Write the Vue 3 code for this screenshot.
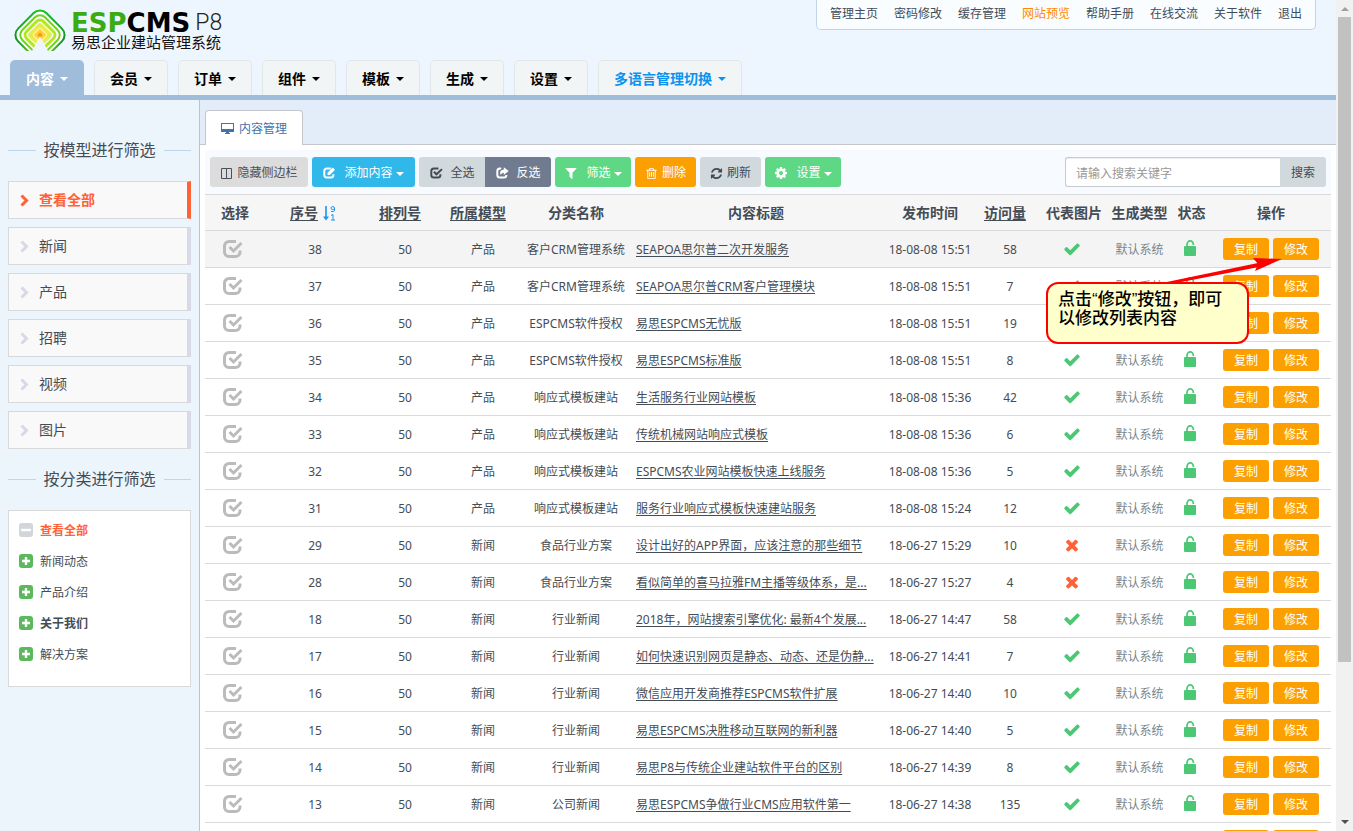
<script setup>
import { ref } from 'vue'

const keyword = ref('')

const topLinks = ['管理主页', '密码修改', '缓存管理', '网站预览', '帮助手册', '在线交流', '关于软件', '退出']
const navTabs = ['内容', '会员', '订单', '组件', '模板', '生成', '设置', '多语言管理切换']
const models = ['查看全部', '新闻', '产品', '招聘', '视频', '图片']
const categories = [
  { name: '查看全部', kind: 'all' },
  { name: '新闻动态', kind: 'node' },
  { name: '产品介绍', kind: 'node' },
  { name: '关于我们', kind: 'strong' },
  { name: '解决方案', kind: 'node' }
]

const data = [
  [38, '产品', '客户CRM管理系统', 'SEAPOA思尔普二次开发服务', '18-08-08 15:51', 58, true],
  [37, '产品', '客户CRM管理系统', 'SEAPOA思尔普CRM客户管理模块', '18-08-08 15:51', 7, true],
  [36, '产品', 'ESPCMS软件授权', '易思ESPCMS无忧版', '18-08-08 15:51', 19, true],
  [35, '产品', 'ESPCMS软件授权', '易思ESPCMS标准版', '18-08-08 15:51', 8, true],
  [34, '产品', '响应式模板建站', '生活服务行业网站模板', '18-08-08 15:36', 42, true],
  [33, '产品', '响应式模板建站', '传统机械网站响应式模板', '18-08-08 15:36', 6, true],
  [32, '产品', '响应式模板建站', 'ESPCMS农业网站模板快速上线服务', '18-08-08 15:36', 5, true],
  [31, '产品', '响应式模板建站', '服务行业响应式模板快速建站服务', '18-08-08 15:24', 12, true],
  [29, '新闻', '食品行业方案', '设计出好的APP界面，应该注意的那些细节', '18-06-27 15:29', 10, false],
  [28, '新闻', '食品行业方案', '看似简单的喜马拉雅FM主播等级体系，是...', '18-06-27 15:27', 4, false],
  [18, '新闻', '行业新闻', '2018年，网站搜索引擎优化: 最新4个发展...', '18-06-27 14:47', 58, true],
  [17, '新闻', '行业新闻', '如何快速识别网页是静态、动态、还是伪静...', '18-06-27 14:41', 7, true],
  [16, '新闻', '行业新闻', '微信应用开发商推荐ESPCMS软件扩展', '18-06-27 14:40', 10, true],
  [15, '新闻', '行业新闻', '易思ESPCMS决胜移动互联网的新利器', '18-06-27 14:40', 5, true],
  [14, '新闻', '行业新闻', '易思P8与传统企业建站软件平台的区别', '18-06-27 14:39', 8, true],
  [13, '新闻', '公司新闻', '易思ESPCMS争做行业CMS应用软件第一', '18-06-27 14:38', 135, true],
  ['', '', '', '', '', '', true]
]
const rows = data.map(([id, model, category, title, date, visits, picture]) => ({
  id, model, category, title, date, visits, picture
}))

const icons = {
  check: 'M1671 566q0 40-28 68l-724 724-136 136q-28 28-68 28t-68-28l-136-136-362-362q-28-28-28-68t28-68l136-136q28-28 68-28t68 28l294 295 656-657q28-28 68-28t68 28l136 136q28 28 28 68z',
  times: 'M1490 1322q0 40-28 68l-136 136q-28 28-68 28t-68-28l-294-294-294 294q-28 28-68 28t-68-28l-136-136q-28-28-28-68t28-68l294-294-294-294q-28-28-28-68t28-68l136-136q28-28 68-28t68 28l294 294 294-294q28-28 68-28t68 28l136 136q28 28 28 68t-28 68l-294 294 294 294q28 28 28 68z',
  filter: 'M1595 295q17 41-14 70l-493 493v742q0 42-39 59-13 5-25 5-27 0-45-19l-256-256q-19-19-19-45v-486l-493-493q-31-29-14-70 17-39 59-39h1280q42 0 59 39z',
  refresh: 'M1639 1056q0 5-1 7-64 268-268 434.5t-478 166.5q-146 0-282.5-55t-243.5-157l-129 129q-19 19-45 19t-45-19-19-45v-448q0-26 19-45t45-19h448q26 0 45 19t19 45-19 45l-137 137q71 66 161 102t187 36q134 0 250-65t186-179q11-17 53-117 8-23 30-23h192q13 0 22.5 9.5t9.5 22.5zm25-800v448q0 26-19 45t-45 19h-448q-26 0-45-19t-19-45 19-45l138-138q-148-137-349-137-134 0-250 65t-186 179q-11 17-53 117-8 23-30 23h-199q-13 0-22.5-9.5t-9.5-22.5v-7q65-268 270-434.5t480-166.5q146 0 284 55.5t245 156.5l130-129q19-19 45-19t45 19 19 45z',
  cog: 'M1152 896q0-106-75-181t-181-75-181 75-75 181 75 181 181 75 181-75 75-181zm512-109v222q0 12-8 23t-20 13l-185 28q-19 54-39 91 35 50 107 138 10 12 10 25t-9 23q-27 37-99 108t-94 71q-12 0-26-9l-138-108q-44 23-91 38-16 136-29 186-7 28-36 28h-222q-14 0-24.5-8.5t-11.5-21.5l-28-184q-49-16-90-37l-141 107q-10 9-25 9-14 0-25-11-126-114-165-168-7-10-7-23 0-12 8-23 15-21 51-66.5t54-70.5q-27-50-41-99l-183-27q-13-2-21-12.5t-8-23.5v-222q0-12 8-23t19-13l186-28q14-46 39-92-40-57-107-138-10-12-10-24 0-10 9-23 26-36 98.5-107.5t94.5-71.5q13 0 26 10l138 107q44-23 91-38 16-136 29-186 7-28 36-28h222q14 0 24.5 8.5t11.5 21.5l28 184q49 16 90 37l142-107q9-9 24-9 13 0 25 10 129 119 165 170 7 8 7 22 0 12-8 23-15 21-51 66.5t-54 70.5q26 50 41 98l183 28q13 2 21 12.5t8 23.5z',
  trash: 'M704 736v576q0 14-9 23t-23 9h-64q-14 0-23-9t-9-23v-576q0-14 9-23t23-9h64q14 0 23 9t9 23zm256 0v576q0 14-9 23t-23 9h-64q-14 0-23-9t-9-23v-576q0-14 9-23t23-9h64q14 0 23 9t9 23zm256 0v576q0 14-9 23t-23 9h-64q-14 0-23-9t-9-23v-576q0-14 9-23t23-9h64q14 0 23 9t9 23zm128 724v-948h-896v948q0 22 7 40.5t14.5 27 10.5 8.5h832q3 0 10.5-8.5t14.5-27 7-40.5zm-672-1076h448l-48-117q-7-9-17-11h-317q-10 2-17 11zm928 32v64q0 14-9 23t-23 9h-96v948q0 83-47 143.5t-113 60.5h-832q-66 0-113-58.5t-47-141.5v-952h-96q-14 0-23-9t-9-23v-64q0-14 9-23t23-9h309l70-167q15-37 54-63t79-26h320q40 0 79 26t54 63l70 167h309q14 0 23 9t9 23z'
}
</script>

<template>
  <div class="window">
    <div class="page">
      <header class="header">
        <div class="header-top">
          <div class="brand">
            <svg class="logo" viewBox="0 0 52 43" aria-hidden="true">
              <defs>
                <linearGradient id="ringOuter" x1="0" y1="0" x2="1" y2="1">
                  <stop offset="0" stop-color="#14c81e" />
                  <stop offset="0.6" stop-color="#12902a" />
                  <stop offset="1" stop-color="#a5e612" />
                </linearGradient>
                <radialGradient id="core" cx="0.5" cy="0.5" r="0.5">
                  <stop offset="0" stop-color="#ffae1a" />
                  <stop offset="0.6" stop-color="#ffe64a" />
                  <stop offset="1" stop-color="#d8f04a" />
                </radialGradient>
                <clipPath id="logoClip"><path d="M0 0H52V43H34L26 28L18 43H0Z" /></clipPath>
              </defs>
              <g clip-path="url(#logoClip)">
                <g transform="translate(26 27) rotate(45)" fill="#fff">
                  <rect x="-20" y="-20" width="40" height="40" rx="9" stroke="url(#ringOuter)" stroke-width="2" />
                  <rect x="-16" y="-16" width="32" height="32" rx="7" stroke="#6fd51c" stroke-width="2" />
                  <rect x="-12" y="-12" width="24" height="24" rx="5" stroke="#b4e61e" stroke-width="3" />
                  <rect x="-9" y="-9" width="18" height="18" rx="3" fill="url(#core)" stroke="#e8f07a" />
                  <rect x="-5" y="-5" width="10" height="10" rx="1" fill="#ffd23c" stroke="#fff3a0" />
                  <rect x="-2" y="-2" width="4" height="4" fill="#f59a1c" />
                </g>
              </g>
            </svg>
            <div class="brand-text">
              <div class="brand-name"><b><span class="esp">ESP</span>CMS</b><span class="version">P8</span></div>
              <div class="brand-sub">易思企业建站管理系统</div>
            </div>
          </div>
          <nav class="top-links">
            <a v-for="link in topLinks" :key="link" href="#" :class="{ preview: link === '网站预览' }">{{ link }}</a>
          </nav>
        </div>
        <nav class="nav">
          <a v-for="(tab, i) in navTabs" :key="tab" href="#" class="nav-tab" :class="{ active: i === 0, lang: i === 7 }">
            {{ tab }}<span class="caret"></span>
          </a>
        </nav>
      </header>

      <div class="body">
        <aside class="sidebar">
          <h2 class="side-title"><span>按模型进行筛选</span></h2>
          <nav class="models">
            <a v-for="(m, i) in models" :key="m" href="#" class="model" :class="{ active: i === 0 }">
              <svg viewBox="0 0 9 13" class="chevron" aria-hidden="true"><path d="M1.500 1.500L6.500 6.500L1.500 11.500" fill="none" stroke="currentColor" stroke-width="3" /></svg>
              {{ m }}
            </a>
          </nav>
          <h2 class="side-title"><span>按分类进行筛选</span></h2>
          <ul class="tree">
            <li v-for="c in categories" :key="c.name" :class="c.kind">
              <svg viewBox="0 0 14 14" class="box-icon" aria-hidden="true">
                <rect width="14" height="14" rx="3" fill="currentColor" />
                <path :d="c.kind === 'all' ? 'M2 7H12' : 'M3 7H11M7 3V11'" stroke="#fff" stroke-width="2.4" />
              </svg>
              <a href="#">{{ c.name }}</a>
            </li>
          </ul>
        </aside>

        <main class="main">
          <div class="tabstrip">
            <a href="#" class="page-tab">
              <svg viewBox="0 0 13 12" class="monitor" aria-hidden="true">
                <path d="M0 0H13V9H0ZM1 1V6H12V1Z" fill="currentColor" fill-rule="evenodd" />
                <path d="M5 9H8V10H9V11H4V10H5Z" fill="currentColor" />
              </svg>
              内容管理
            </a>
          </div>

          <div class="content">
            <div class="toolbar">
              <button class="btn light w98">
                <svg viewBox="0 0 13 11" class="columns" aria-hidden="true"><path d="M1.500 .5H11.500V10.500H1.500ZM6.500 .5V10.500" fill="none" stroke="currentColor" /></svg>隐藏侧边栏
              </button>
              <button class="btn blue w103 wide">
                <svg viewBox="0 0 20 18" class="boxed" aria-hidden="true">
                  <path d="M12 2H6A4 4 0 0 0 2 6V12A4 4 0 0 0 6 16H12A4 4 0 0 0 16 12V11" fill="none" stroke="currentColor" stroke-width="3" />
                  <path d="M7 12V8.500L15 .5L18.500 4L10.500 12Z" fill="currentColor" />
                </svg><span>添加内容<i class="caret"></i></span>
              </button>
              <div class="btn-group">
                <button class="btn gray w66 wide">
                  <svg viewBox="0 0 20 18" class="boxed" aria-hidden="true">
                    <path d="M13 2H6A4 4 0 0 0 2 6V12A4 4 0 0 0 6 16H12A4 4 0 0 0 16 12V11M6 7L10 11L18.500 3" fill="none" stroke="currentColor" stroke-width="3" />
                  </svg>全选
                </button>
                <button class="btn slate w66 wide">
                  <svg viewBox="0 0 20 18" class="boxed" aria-hidden="true">
                    <path d="M8 2H6A4 4 0 0 0 2 6V12A4 4 0 0 0 6 16H12A4 4 0 0 0 16 12" fill="none" stroke="currentColor" stroke-width="3" />
                    <path d="M12 0L19.500 6L12 12V8.500Q8 8.500 7.500 12.500Q3.500 5 12 3.500Z" fill="currentColor" />
                  </svg>反选
                </button>
              </div>
              <button class="btn green w76 wide">
                <svg viewBox="0 0 1792 1792" aria-hidden="true"><path :d="icons.filter" fill="currentColor" /></svg><span>筛选<i class="caret"></i></span>
              </button>
              <button class="btn orange w61">
                <svg viewBox="0 0 1792 1792" class="thin" aria-hidden="true"><path :d="icons.trash" fill="currentColor" /></svg>删除
              </button>
              <button class="btn gray w61">
                <svg viewBox="0 0 1792 1792" class="thin" aria-hidden="true"><path :d="icons.refresh" fill="currentColor" /></svg>刷新
              </button>
              <button class="btn green w76 wide">
                <svg viewBox="0 0 1792 1792" aria-hidden="true"><path :d="icons.cog" fill="currentColor" /></svg><span>设置<i class="caret"></i></span>
              </button>
              <form class="search" @submit.prevent>
                <input v-model="keyword" type="text" placeholder="请输入搜索关键字" aria-label="请输入搜索关键字">
                <button class="btn gray" type="submit">搜索</button>
              </form>
            </div>

            <div class="table-wrap">
              <table>
                <colgroup>
                  <col class="c-pick"><col class="c-id"><col class="c-sort"><col class="c-model"><col class="c-cat"><col>
                  <col class="c-date"><col class="c-visits"><col class="c-pic"><col class="c-type"><col class="c-state"><col class="c-ops">
                </colgroup>
                <thead>
                  <tr>
                    <th>选择</th>
                    <th class="sorted">
                      <a href="#">序号</a>
                      <svg class="sort" viewBox="0 0 13 15" aria-hidden="true">
                        <path d="M3 0V12" stroke="currentColor" stroke-width="1.6" />
                        <path d="M0 10.500H6L3 14.500Z" fill="currentColor" />
                        <path d="M8 5.500H10.500Q11.500 5.500 11.500 4V2Q11.500 .6 9.800 .6T8 2T9.800 3.600L11.500 3M8 9.500L10 8.500V14M8 14H12" fill="none" stroke="currentColor" />
                      </svg>
                    </th>
                    <th class="shift"><a href="#">排列号</a></th>
                    <th class="shift"><a href="#">所属模型</a></th>
                    <th>分类名称</th>
                    <th>内容标题</th>
                    <th>发布时间</th>
                    <th class="shift"><a href="#">访问量</a></th>
                    <th>代表图片</th>
                    <th>生成类型</th>
                    <th>状态</th>
                    <th>操作</th>
                  </tr>
                </thead>
                <tbody>
                  <tr v-for="(row, i) in rows" :key="i" :class="{ hover: i === 0 }">
                    <td class="pick">
                      <label>
                        <input type="checkbox" :aria-label="'选择 ' + row.id">
                        <svg viewBox="0 0 20 18" aria-hidden="true">
                          <path d="M13 1.500H6A4.500 4.500 0 0 0 1.500 6V12A4.500 4.500 0 0 0 6 16.500H12.500A4.500 4.500 0 0 0 17 12V10.500" fill="none" stroke="currentColor" stroke-width="3" />
                          <path d="M6.500 7L10.500 11L18.500 3" fill="none" stroke="currentColor" stroke-width="3" />
                        </svg>
                      </label>
                    </td>
                    <td class="text">{{ row.id }}</td>
                    <td class="text">{{ row.id ? 50 : '' }}</td>
                    <td class="text">{{ row.model }}</td>
                    <td class="text">{{ row.category }}</td>
                    <td class="text title"><a href="#">{{ row.title }}</a></td>
                    <td class="text">{{ row.date }}</td>
                    <td class="text">{{ row.visits }}</td>
                    <td class="pic">
                      <svg viewBox="0 0 1792 1792" :class="row.picture ? 'yes' : 'no'" aria-hidden="true">
                        <path :d="row.picture ? icons.check : icons.times" fill="currentColor" />
                      </svg>
                    </td>
                    <td class="text type">{{ row.id ? '默认系统' : '' }}</td>
                    <td class="state">
                      <svg viewBox="0 0 12 16" aria-hidden="true">
                        <rect y="6" width="12" height="10" rx="1" fill="currentColor" />
                        <path d="M3 7V4.500A3.200 3.600 0 0 1 9.400 4.500V5" fill="none" stroke="currentColor" stroke-width="1.700" />
                      </svg>
                    </td>
                    <td>
                      <div class="ops"><button>复制</button><button>修改</button></div>
                    </td>
                  </tr>
                </tbody>
              </table>

              <div class="callout">
                <svg class="arrow" viewBox="0 0 120 26" aria-hidden="true">
                  <path d="M0 25L96 5L97 9L14 25Z" fill="#f00" />
                  <path d="M120 1L91 0L96 6L93 13Z" fill="#f00" />
                </svg>
                <p>点击“修改”按钮，即可以修改列表内容</p>
              </div>
            </div>
          </div>
        </main>
      </div>
    </div>

    <div class="scrollbar" aria-hidden="true">
      <span class="up"></span>
      <span class="thumb"></span>
      <span class="down"></span>
    </div>
  </div>
</template>

<style>
body {
  overflow: hidden;
}
</style>

<style scoped>
.window {
  display: flex;
  height: 100vh;
  overflow: hidden;
  font: 12px/18px "Noto Sans", "Noto Sans CJK SC", sans-serif;
  color: #444c55;
  background: #fff;
}
.window * {
  box-sizing: border-box;
}
.window button,
.window input {
  font: inherit;
}
a {
  color: inherit;
  text-decoration: none;
}
svg {
  display: block;
  flex: none;
}
.page {
  flex: 1;
  min-width: 0;
  display: flex;
  flex-direction: column;
}
.caret {
  display: inline-block;
  border: 4px solid transparent;
  border-top-color: currentColor;
  border-bottom: 0;
  vertical-align: middle;
}

/* Header */
.header {
  flex: none;
  background: #edf6fe;
  border-bottom: 5px solid #a0bcdb;
}
.header-top {
  display: flex;
  justify-content: space-between;
  align-items: flex-start;
  height: 60px;
  padding: 0 20px 0 14px;
}
.brand {
  display: flex;
  gap: 5px;
  padding-top: 8px;
}
.logo {
  width: 52px;
  height: 43px;
}
.brand-name {
  display: flex;
  align-items: center;
  gap: 5px;
  height: 27px;
  padding-top: 3px;
  color: #000;
  font: 26px/24px "DejaVu Sans", sans-serif;
}
.brand-name .esp {
  color: #3cab12;
}
.version {
  color: #222;
  font: 300 23px/24px Roboto, sans-serif;
}
.brand-sub {
  color: #111;
  font-size: 15px;
  line-height: 14px;
}
.top-links {
  display: flex;
  height: 30px;
  padding: 0 5px;
  background: #f9fdff;
  border: 1px solid #c1d3e6;
  border-top: 0;
  border-radius: 0 0 5px 5px;
}
.top-links a {
  padding: 0 8px;
  line-height: 28px;
}
.top-links .preview {
  color: #ff8a00;
}
.nav {
  display: flex;
  gap: 10px;
  padding-left: 10px;
}
.nav-tab {
  display: flex;
  align-items: center;
  gap: 6px;
  height: 35px;
  padding: 1px 15px 0;
  border: 1px solid #e3e6e8;
  border-bottom: 0;
  border-radius: 5px 5px 0 0;
  background: #f1f5f6;
  color: #000;
  font-size: 14px;
  font-weight: 700;
}
.nav-tab.active {
  background: #a0bcdb;
  border-color: #a0bcdb;
  color: #fff;
}
.nav-tab.lang {
  color: #0b93ee;
}

/* Sidebar */
.body {
  flex: 1;
  min-height: 0;
  display: flex;
}
.sidebar {
  flex: none;
  width: 200px;
  padding: 20px 8px 0;
  background: #ecf4fc;
  border-right: 1px solid #bcc3cb;
}
.side-title {
  display: flex;
  align-items: center;
  gap: 8px;
  margin: 18px 0 19px;
  font-size: 16px;
  font-weight: 400;
  line-height: 24px;
}
.side-title::before,
.side-title::after {
  content: "";
  flex: 1;
  height: 1px;
  background: #bcd6f0;
}
.models {
  display: grid;
  gap: 8px;
}
.model {
  display: flex;
  align-items: center;
  gap: 10px;
  height: 38px;
  padding-left: 11px;
  background: #f9f9f9;
  border: 1px solid #d9d9dc;
  border-right: 4px solid #d7d9e6;
  font-size: 14px;
}
.chevron {
  width: 9px;
  height: 13px;
  color: #d7d9e6;
}
.model.active {
  border-right-color: #ff6237;
  color: #ff6237;
  font-weight: 700;
}
.model.active .chevron {
  color: #ff6237;
}
.tree {
  margin: 0;
  padding: 4px 10px 16px;
  list-style: none;
  background: #fff;
  border: 1px solid #d9d9dc;
}
.tree li {
  display: flex;
  align-items: center;
  gap: 7px;
  height: 31px;
}
.box-icon {
  width: 14px;
  height: 14px;
  margin-bottom: 2px;
  color: #5cb85c;
}
.tree .all {
  color: #ff6237;
  font-weight: 700;
}
.tree .all .box-icon {
  color: #d2d6db;
}
.tree .strong {
  font-weight: 700;
}

/* Main area */
.main {
  flex: 1;
  min-width: 0;
}
.tabstrip {
  display: flex;
  height: 45px;
  padding: 10px 5px 0;
  background: #e3edfa;
  border-bottom: 1px solid #c3c7cc;
}
.page-tab {
  display: flex;
  align-items: center;
  gap: 5px;
  height: 35px;
  padding: 2px 15px 0;
  background: #fff;
  border: 1px solid #c3c7cc;
  border-bottom: 0;
  border-radius: 4px 4px 0 0;
  color: #4572a7;
}
.monitor {
  width: 13px;
  height: 12px;
}
.content {
  padding: 5px 5px 0;
}
.toolbar {
  display: flex;
  gap: 4px;
  height: 44px;
  padding: 7px 5px;
  background: #f7fbff;
}
.btn {
  display: flex;
  align-items: center;
  justify-content: center;
  gap: 4px;
  height: 30px;
  padding: 2px 11px 0;
  border: 0;
  border-radius: 3px;
  white-space: nowrap;
}
.btn svg {
  width: 14px;
  height: 14px;
}
.btn .thin {
  width: 13px;
  height: 13px;
}
.btn .columns {
  width: 13px;
  height: 11px;
}
.btn .boxed {
  width: 13px;
  height: 12px;
}
.btn .caret {
  margin-left: 3px;
}
.btn.wide {
  gap: 8px;
}
.btn.w98 {
  width: 98px;
  padding-inline: 0;
}
.w103 {
  width: 103px;
}
.w66 {
  width: 66px;
}
.btn.w76 {
  width: 76px;
  padding-inline: 0;
}
.w61 {
  width: 61px;
}
.light {
  background: #dcdcdc;
  color: #4c5058;
}
.gray {
  background: #d2d9dd;
  color: #434a54;
}
.blue {
  background: #31b8ea;
  color: #fff;
}
.slate {
  background: #717b90;
  color: #fff;
}
.green {
  background: #5fd885;
  color: #fff;
}
.orange {
  background: #fc9f00;
  color: #fff;
}
.btn-group {
  display: flex;
}
.btn-group .btn:first-child {
  border-radius: 3px 0 0 3px;
}
.btn-group .btn:last-child {
  border-radius: 0 3px 3px 0;
}
.search {
  display: flex;
  margin-left: auto;
}
.search input {
  width: 215px;
  height: 30px;
  padding: 2px 10px 0;
  border: 1px solid #c8cbce;
  border-right: 0;
  border-radius: 3px 0 0 3px;
  background: #fff;
  box-shadow: inset 0 1px 1px #eee;
  outline: 0;
}
.search input::placeholder {
  color: #999;
}
.search .btn {
  border-radius: 0 3px 3px 0;
}

/* Table */
.table-wrap {
  position: relative;
}
table {
  width: 100%;
  table-layout: fixed;
  border-collapse: separate;
  border-spacing: 0;
}
.c-pick { width: 60px; }
.c-id { width: 100px; }
.c-sort { width: 80px; }
.c-model { width: 76px; }
.c-cat { width: 110px; }
.c-date { width: 98px; }
.c-visits { width: 62px; }
.c-pic { width: 66px; }
.c-type { width: 65px; }
.c-state { width: 39px; }
.c-ops { width: 120px; }
th,
td {
  height: 37px;
  padding: 0;
  border-bottom: 1px solid #dadada;
  text-align: center;
  white-space: nowrap;
}
th {
  border-top: 1px solid #dadada;
  background: #f6f6f6;
  font-size: 14px;
  font-weight: 700;
}
td.text {
  padding-top: 2px;
}
th a,
.title a {
  text-decoration: underline;
  text-underline-offset: 2px;
}
th.shift {
  padding-right: 10px;
}
th.sorted {
  padding-right: 4px;
}
.hover td {
  background: #f4f4f4;
}
.sort {
  display: inline-block;
  width: 13px;
  height: 15px;
  margin-left: 5px;
  color: #1b95f0;
  vertical-align: middle;
}
.pick label {
  position: relative;
  display: flex;
  justify-content: center;
  padding-right: 4px;
  color: #bbb;
}
.pick input {
  position: absolute;
  inset: 0;
  margin: auto;
  opacity: 0;
}
.pick svg {
  width: 20px;
  height: 18px;
}
td.title {
  padding: 2px 5px 0;
  overflow: hidden;
  text-align: left;
}
.pic {
  padding-right: 5px;
}
.state {
  padding: 0 4px 2px 0;
  color: #4cc774;
}
.pic svg {
  width: 18px;
  height: 18px;
  margin: 0 auto;
}
.yes {
  color: #4cc774;
}
.no {
  color: #ff6237;
}
.type {
  color: #7a868c;
}
.state svg {
  width: 12px;
  height: 16px;
  margin: 0 auto;
}
.ops {
  display: flex;
  justify-content: center;
  gap: 4px;
}
.ops button {
  width: 46px;
  height: 22px;
  padding: 2px 0 0;
  border: 0;
  border-radius: 3px;
  background: #fc9f00;
  color: #fff;
}

/* Hint balloon laid over the table */
.callout {
  position: absolute;
  top: 88px;
  right: 82px;
  width: 203px;
  height: 62px;
  padding: 6px 10px;
  border: 2px solid #f00;
  border-radius: 12px;
  background: #ffc;
  color: #000;
  font: 500 17px/19px "Liberation Sans", "Noto Sans CJK SC", sans-serif;
}
.callout p {
  margin: 0;
}
.arrow {
  position: absolute;
  right: -35px;
  bottom: 58px;
  width: 120px;
  height: 26px;
}

/* Window scrollbar */
.scrollbar {
  flex: none;
  display: flex;
  flex-direction: column;
  align-items: center;
  width: 17px;
  padding: 7px 0;
  background: #f1f1f1;
}
.up {
  border: 4px solid transparent;
  border-top: 0;
  border-bottom-color: #a0a0a0;
}
.thumb {
  width: 13px;
  height: 79%;
  margin: 6px 0 auto;
  background: #c1c1c1;
}
.down {
  border: 4px solid transparent;
  border-bottom: 0;
  border-top-color: #505050;
}
</style>
